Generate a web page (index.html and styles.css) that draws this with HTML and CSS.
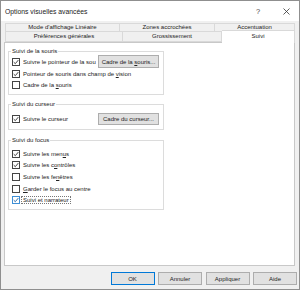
FILE: index.html
```html
<!DOCTYPE html>
<html lang="fr">
    <head>
        <meta charset="UTF-8">
        <title>Options visuelles avancées</title>
        <link rel="stylesheet" href="styles.css">
    </head>
    <body>
        <div class="window">
            <div class="titlebar">
                <span class="title">Options visuelles avancées</span>
                <span class="help">?</span>
                <span class="close">
                    <svg width="7" height="7" viewBox="0 0 7 7"><path d="M0.5 0.5L6.5 6.5M6.5 0.5L0.5 6.5" stroke="#333" stroke-width="0.8" fill="none"/></svg>
                </span>
            </div>

            <div class="tabs">
                <div class="tabRow back">
                    <div class="tab" style="width:115px">Mode d'affichage Linéaire</div>
                    <div class="tab" style="width:95px">Zones accrochées</div>
                    <div class="tab" style="width:80px">Accentuation</div>
                </div>
                <div class="tabRow front">
                    <div class="tab" style="width:118px">Préférences générales</div>
                    <div class="tab" style="width:99px">Grossissement</div>
                    <div class="tab selected" style="width:73px">Suivi</div>
                </div>
            </div>

            <div class="panel">
                <fieldset class="group mouseGroup">
                    <legend>Suivi de la souris</legend>
                    <div class="row tall">
                        <label class="check">
                            <span class="box"><svg viewBox="0 0 6 6"><polyline points="0.7,3.1 2.3,4.7 5.3,1.1"/></svg></span>
                            <span class="clip">Suivre le poi<u>n</u>teur de la sou</span>
                        </label>
                        <button class="btn frameBtn">Cadre de la <u>s</u>ouris...</button>
                    </div>
                    <div class="row">
                        <label class="check">
                            <span class="box"><svg viewBox="0 0 6 6"><polyline points="0.7,3.1 2.3,4.7 5.3,1.1"/></svg></span>
                            <span>Pointeur de souris dans champ de <u>v</u>ision</span>
                        </label>
                    </div>
                    <div class="row">
                        <label class="check">
                            <span class="box"></span>
                            <span>Cadre de la <u>s</u>ouris</span>
                        </label>
                    </div>
                </fieldset>

                <fieldset class="group caretGroup">
                    <legend>Suivi du curseur</legend>
                    <div class="row mid">
                        <label class="check">
                            <span class="box"><svg viewBox="0 0 6 6"><polyline points="0.7,3.1 2.3,4.7 5.3,1.1"/></svg></span>
                            <span class="clip">Suivre le <u>c</u>urseur</span>
                        </label>
                        <button class="btn frameBtn short">Cadre du curseur...</button>
                    </div>
                </fieldset>

                <fieldset class="group focusGroup">
                    <legend>Suivi du focus</legend>
                    <div class="row focusRow">
                        <label class="check">
                            <span class="box"><svg viewBox="0 0 6 6"><polyline points="0.7,3.1 2.3,4.7 5.3,1.1"/></svg></span>
                            <span>Suivre les men<u>u</u>s</span>
                        </label>
                    </div>
                    <div class="row focusRow">
                        <label class="check">
                            <span class="box"><svg viewBox="0 0 6 6"><polyline points="0.7,3.1 2.3,4.7 5.3,1.1"/></svg></span>
                            <span>Suivre les c<u>o</u>ntrôles</span>
                        </label>
                    </div>
                    <div class="row focusRow">
                        <label class="check">
                            <span class="box"></span>
                            <span>Suivre les fe<u>n</u>êtres</span>
                        </label>
                    </div>
                    <div class="row focusRow">
                        <label class="check">
                            <span class="box"></span>
                            <span><u>G</u>arder le focus au centre</span>
                        </label>
                    </div>
                    <div class="row focusRow">
                        <label class="check active">
                            <span class="box"><svg viewBox="0 0 6 6"><polyline points="0.7,3.1 2.3,4.7 5.3,1.1"/></svg></span>
                            <span class="focused">Suivi et narrateur</span>
                        </label>
                    </div>
                </fieldset>
            </div>

            <div class="footer">
                <button class="btn dlgBtn default">OK</button>
                <button class="btn dlgBtn">Annuler</button>
                <button class="btn dlgBtn">Appliquer</button>
                <button class="btn dlgBtn">Aide</button>
            </div>
        </div>
    </body>
</html>
```

FILE: styles.css
```css
* {
    box-sizing: border-box;
}
body {
    margin: 0;
    font-family: "Liberation Sans", Arial, sans-serif;
    font-size: 6px;
    color: #222;
}
.window {
    width: 300px;
    height: 290px;
    border: 1px solid #8f8f8f;
    background-color: #f0f0f0;
    display: flex;
    flex-direction: column;
}

/* title bar */
.titlebar {
    height: 20px;
    flex: none;
    background-color: #fff;
    display: flex;
    align-items: center;
    padding-left: 4px;
}
.title {
    flex: 1;
    font-size: 6.8px;
}
.help {
    width: 24px;
    margin-right: 3px;
    text-align: center;
    font-size: 7.5px;
    color: #444;
}
.close {
    width: 26px;
    display: flex;
    justify-content: center;
}

/* tabs */
.tabs {
    margin: 2px 0 0 4px;
    flex: none;
}
.tabRow {
    display: flex;
}
.tab {
    border: 1px solid #d9d9d9;
    border-left: none;
    background-color: #f0f0f0;
    text-align: center;
    white-space: nowrap;
}
.tab:first-child {
    border-left: 1px solid #d9d9d9;
}
.back .tab {
    height: 9px;
    line-height: 7px;
}
.front .tab {
    height: 10px;
    line-height: 9px;
    border-top: none;
}
.front .tab.selected {
    position: relative;
    z-index: 1;
    height: 13px;
    margin-top: -2px;
    margin-bottom: -1px;
    line-height: 11px;
    background-color: #fff;
    border-top: 1px solid #d9d9d9;
    border-bottom: none;
}

/* panel */
.panel {
    height: 224px;
    flex: none;
    margin: 0 4px 0 3px;
    padding: 4px 0 0 3px;
    background-color: #fff;
    border: 1px solid #c8c8c8;
}
.group {
    width: 156px;
    margin: 0;
    min-width: 0;
    border: 1px solid #dcdcdc;
    padding: 0 3px 4px 3px;
}
.group legend {
    padding: 0 1px;
    margin-left: -1px;
    line-height: 8px;
}
.caretGroup {
    margin-top: 5px;
    padding-top: 5px;
}
.focusGroup {
    margin-top: 6px;
    padding-top: 4px;
    padding-bottom: 3px;
}
.row {
    display: flex;
    align-items: center;
    height: 11px;
}
.row.tall {
    height: 13px;
}
.row.mid {
    height: 12px;
}
.row.focusRow {
    height: 11.6px;
}
.check {
    display: flex;
    align-items: center;
    gap: 3px;
    white-space: nowrap;
}
.box {
    width: 8px;
    height: 8px;
    border: 1px solid #444;
    background-color: #fff;
    display: flex;
}
.box svg {
    width: 6px;
    height: 6px;
}
.box polyline {
    fill: none;
    stroke: #333;
    stroke-width: 0.9;
}
.active .box {
    border-color: #3d8fd6;
}
.active .box polyline {
    stroke: #1c5f9e;
}
.focused {
    outline: 1px dotted #777;
    padding: 0 1px;
    margin-left: -1px;
}
.clip {
    width: 73px;
    overflow: hidden;
}
u {
    text-decoration-thickness: 0.5px;
    text-underline-offset: 0.5px;
}

/* buttons */
.btn {
    font-family: inherit;
    font-size: 6px;
    color: #222;
    background-color: #e1e1e1;
    border: 1px solid #adadad;
    padding: 0;
    white-space: nowrap;
}
.frameBtn {
    margin-left: auto;
    margin-right: 1px;
    width: 61px;
    height: 13px;
}
.frameBtn.short {
    height: 12px;
}
.footer {
    flex: 1;
    display: flex;
    justify-content: flex-end;
    align-items: flex-start;
    gap: 3.5px;
    padding: 6px 2px 0 0;
}
.dlgBtn {
    width: 44px;
    height: 13px;
}
.dlgBtn.default {
    border-color: #0078d7;
}
```
